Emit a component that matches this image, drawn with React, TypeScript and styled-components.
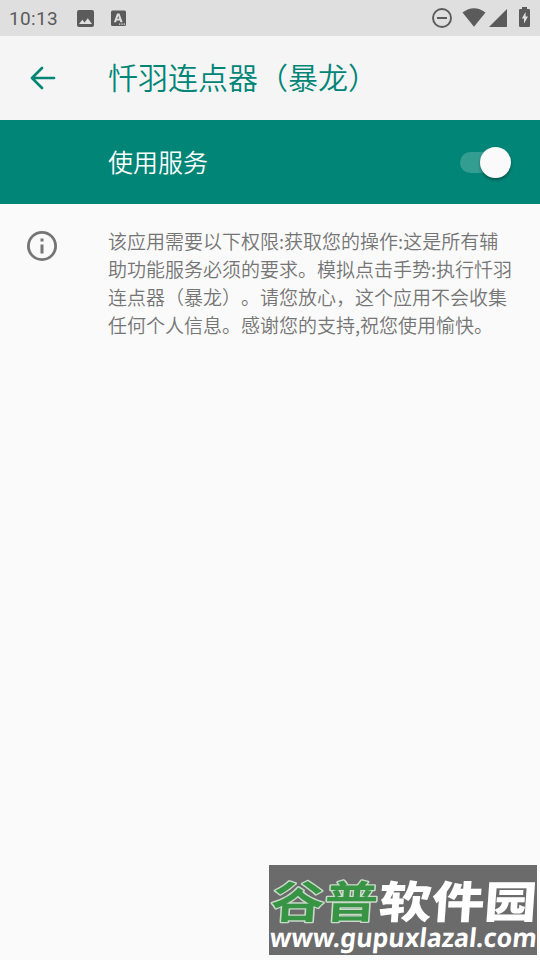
import React from "react";
import styled, { createGlobalStyle } from "styled-components";

const GlobalStyle = createGlobalStyle`
  * { box-sizing: border-box; }
  body {
    margin: 0;
    background: #fafafa;
    font-family: Roboto, "Noto Sans CJK SC", sans-serif;
    text-spacing-trim: space-all;
  }
`;

const Screen = styled.main`
  position: relative;
  width: 540px;
  height: 960px;
  overflow: hidden;
  background: #fafafa;
`;

const StatusBar = styled.header`
  display: flex;
  align-items: center;
  height: 36px;
  padding: 0 8px 0 9px;
  background: #dfdfdf;
  color: #5b5b5b;
`;

const Clock = styled.time`
  width: 67px;
  padding-top: 1px;
  font-size: 19px;
  font-weight: 450;
  letter-spacing: 0.35px;
  line-height: 36px;
`;

const StatusIcons = styled.div<{ $end?: boolean }>`
  display: flex;
  align-items: center;
  height: 36px;
  margin-left: ${(p) => (p.$end ? "auto" : "0")};
  svg { display: block; }
`;

const AppBar = styled.div`
  display: flex;
  align-items: center;
  height: 84px;
  background: #f5f5f5;
  color: #008577;
`;

const LeadingSlot = styled.div`
  flex: none;
  width: 108px;
  padding-left: 24px;
  svg { display: block; }
`;

const Title = styled.h1`
  margin: 0;
  padding-top: 2px;
  font-size: 30px;
  font-weight: 350;
  line-height: 44px;
  white-space: nowrap;
`;

const ServiceRow = styled.div`
  display: flex;
  align-items: center;
  justify-content: space-between;
  height: 84px;
  padding: 0 29px 0 108px;
  background: #008577;
  color: #fff;
  font-size: 25px;
  font-weight: 350;
`;

const ServiceLabel = styled.span`
  padding-bottom: 2px;
`;

const Toggle = styled.button`
  display: flex;
  align-items: center;
  justify-content: flex-end;
  width: 51px;
  height: 21px;
  padding: 0;
  border: 0;
  border-radius: 11px;
  background: #339d92;
`;

const Thumb = styled.span`
  width: 31px;
  height: 31px;
  flex: none;
  border-radius: 50%;
  background: #fafafa;
  box-shadow: 0 2px 3px rgba(0, 0, 0, 0.35);
`;

const Info = styled.section`
  display: flex;
  align-items: flex-start;
  padding-top: 23px;
`;

const InfoIcon = styled(LeadingSlot)`
  padding-top: 1px;
`;

const Description = styled.p`
  margin: 0;
  color: #757575;
  font-family: "Noto Sans CJK SC", sans-serif;
  font-size: 19px;
  font-weight: 350;
  line-height: 28px;
  white-space: nowrap;
`;

const Watermark = styled.aside`
  position: absolute;
  left: 269px;
  top: 865px;
  width: 268px;
  height: 90px;
  background: #6b6b6b;
  svg { display: block; overflow: visible; }
`;

const descriptionLines = [
  "该应用需要以下权限:获取您的操作:这是所有辅",
  "助功能服务必须的要求。模拟点击手势:执行忏羽",
  "连点器（暴龙）。请您放心，这个应用不会收集",
  "任何个人信息。感谢您的支持,祝您使用愉快。",
];

export default function App() {
  return (
    <Screen>
      <GlobalStyle />
      <StatusBar>
        <Clock>10:13</Clock>
        <StatusIcons>
          <svg width="52" height="36" viewBox="76 0 52 36" fill="#5b5b5b">
            <path fillRule="evenodd" d="M79 10h13q2 0 2 2v13q0 2-2 2H79q-2 0-2-2V12q0-2 2-2Zm0 14h13l-4.2-5.7-3.2 4.1-2.3-2.7Z" />
            <rect x="111" y="10.5" width="15" height="15.5" rx="1.5" />
            <path fillRule="evenodd" fill="#dfdfdf" d="M117 13.4h2.5l3.1 8.8h-2.2l-.6-1.8h-3.1l-.6 1.8h-2.2Zm.3 5.3h1.9l-.95-3Z" />
            <path fill="#dfdfdf" d="M119 23.5h1.3v1.3H119Zm2.4 0h1.3v1.3h-1.3Zm2.3 0h1.3v1.3h-1.3Z" />
          </svg>
        </StatusIcons>
        <StatusIcons $end>
          <svg width="102" height="36" viewBox="430 0 102 36" fill="#5b5b5b">
            <circle cx="442" cy="18" r="9" fill="none" stroke="#5b5b5b" strokeWidth="1.9" />
            <path d="M437 17h10v2h-10Z" />
            <path d="M462.5 12.5Q474 4 485.5 12.5L474 26.7Z" />
            <path d="M507 9v18h-18Z" />
            <path fillRule="evenodd" d="M522 7h5v2h1.8q1.2 0 1.2 1.2v15.6q0 1.2-1.2 1.2h-8.6q-1.2 0-1.2-1.2V10.2q0-1.2 1.2-1.2h1.8Zm3.6 5-3.8 6.6h2.2v5l4-7h-2.4Z" />
          </svg>
        </StatusIcons>
      </StatusBar>
      <AppBar>
        <LeadingSlot>
          <svg width="36" height="36" viewBox="0 0 36 36" fill="none" stroke="#008577" strokeWidth="2.7" strokeLinecap="round" strokeLinejoin="round">
            <path d="M30 18H8M18 8 8 18l10 10" />
          </svg>
        </LeadingSlot>
        <Title>忏羽连点器（暴龙）</Title>
      </AppBar>
      <ServiceRow>
        <ServiceLabel>使用服务</ServiceLabel>
        <Toggle role="switch" aria-checked="true" aria-label="使用服务">
          <Thumb />
        </Toggle>
      </ServiceRow>
      <Info>
        <InfoIcon>
          <svg width="36" height="36" viewBox="0 0 36 36">
            <circle cx="18" cy="18" r="13.6" fill="none" stroke="#757575" strokeWidth="2.8" />
            <path fill="#757575" d="M16.5 10.5h3v3h-3Zm0 6h3v9h-3Z" />
          </svg>
        </InfoIcon>
        <Description>
          {descriptionLines.map((line) => (
            <React.Fragment key={line}>
              {line}
              <br />
            </React.Fragment>
          ))}
        </Description>
      </Info>
      <Watermark>
        <svg width="268" height="95" viewBox="0 0 268 95">
          <g fontFamily="'Noto Sans CJK SC', sans-serif">
            <text transform="translate(1 53) skewX(-4)" fontSize="44" fontWeight="700" textLength="107" lengthAdjust="spacingAndGlyphs" fill="#379444" stroke="#c9d9ca" strokeWidth="2.6" strokeLinejoin="round" paintOrder="stroke">谷普</text>
            <text transform="translate(109 53) skewX(-4)" fontSize="44" fontWeight="900" textLength="158" lengthAdjust="spacingAndGlyphs" fill="#fff">软件园</text>
          </g>
          <text transform="translate(0 82) skewX(-6)" textLength="267" lengthAdjust="spacingAndGlyphs" fontFamily="'Noto Sans', 'Open Sans', sans-serif" fontWeight="700" fontSize="26" fill="#fff">www.gupuxlazal.com</text>
        </svg>
      </Watermark>
    </Screen>
  );
}
